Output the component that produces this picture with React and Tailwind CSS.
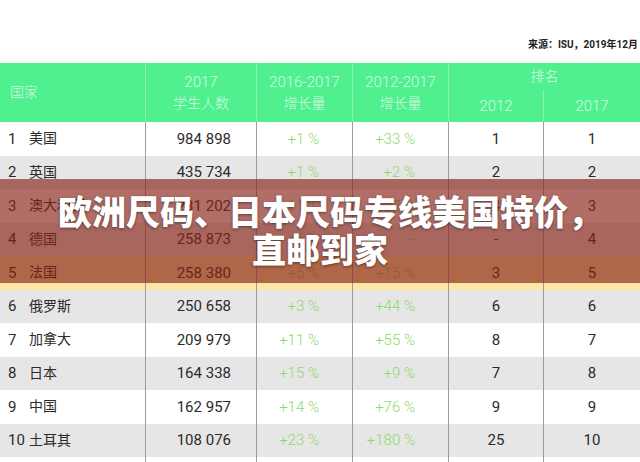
import React from "react";

const rows = [
  ["1", "美国", "984 898", "+1 %", "+33 %", "1", "1"],
  ["2", "英国", "435 734", "+1 %", "+2 %", "2", "2"],
  ["3", "澳大利亚", "231 202", "+11 %", "+37 %", "4", "3"],
  ["4", "德国", "258 873", "+5 %", "-", "-", "4"],
  ["5", "法国", "258 380", "+5 %", "+15 %", "3", "5"],
  ["6", "俄罗斯", "250 658", "+3 %", "+44 %", "6", "6"],
  ["7", "加拿大", "209 979", "+11 %", "+55 %", "8", "7"],
  ["8", "日本", "164 338", "+15 %", "+9 %", "7", "8"],
  ["9", "中国", "162 957", "+14 %", "+76 %", "9", "9"],
  ["10", "土耳其", "108 076", "+23 %", "+180 %", "25", "10"],
];

const cols = "grid-cols-[146px_111px_96px_96px_95px_96px]";

function Row({ r, i }) {
  const bg = i === 4 ? "bg-[#fde6a6]" : i % 2 === 0 ? "bg-white" : "bg-[#e6e6e6]";
  const cell = "flex items-center border-r border-[#9c9c9c]";
  return (
    <div className={`grid ${cols} h-[33.5px] ${bg} text-[15px] text-[#2b2b2b]`}>
      <div className={`${cell} pl-2`}>
        <span className="w-[21px]">{r[0]}</span>
        <span className="text-[14px]">{r[1]}</span>
      </div>
      <div className={`${cell} justify-end pr-[25px]`}>{r[2]}</div>
      <div className={`${cell} justify-end pr-[33px] text-[#8fd86c] font-light`}>{r[3]}</div>
      <div className={`${cell} justify-end pr-[33px] text-[#8fd86c] font-light`}>{r[4]}</div>
      <div className={`${cell} justify-center`}>{r[5]}</div>
      <div className="flex items-center justify-center">{r[6]}</div>
    </div>
  );
}

export default function App() {
  return (
    <div className="relative w-[640px] h-[462px] overflow-hidden bg-white font-['Roboto','Noto_Sans_CJK_SC',sans-serif]">
      <div className="h-[63px] flex items-end justify-end pr-[2px] pb-[11px]">
        <span className="text-[10px] font-bold text-[#222]">来源：ISU，2019年12月</span>
      </div>

      <div className={`grid ${cols} h-[59px] bg-[#50f08f] text-[#d4fbe3] font-light`}>
        <div className="flex items-center pl-[10px] text-[14px] border-r border-[#86f4b1]">国家</div>
        <div className="flex flex-col items-center justify-center leading-[21px] border-r border-[#86f4b1]">
          <span className="text-[15px]">2017</span>
          <span className="text-[14px]">学生人数</span>
        </div>
        <div className="flex flex-col items-center justify-center leading-[21px] border-r border-[#86f4b1]">
          <span className="text-[15px]">2016-2017</span>
          <span className="text-[14px]">增长量</span>
        </div>
        <div className="flex flex-col items-center justify-center leading-[21px] border-r border-[#86f4b1]">
          <span className="text-[15px]">2012-2017</span>
          <span className="text-[14px]">增长量</span>
        </div>
        <div className="col-span-2 flex flex-col">
          <div className="h-[27px] flex items-center justify-center text-[14px]">排名</div>
          <div className="flex-1 grid grid-cols-[95px_96px] text-[15px]">
            <div className="flex items-center justify-center border-r border-[#86f4b1]">2012</div>
            <div className="flex items-center justify-center">2017</div>
          </div>
        </div>
      </div>

      {rows.map((r, i) => (
        <Row key={i} r={r} i={i} />
      ))}
      <div className={`grid ${cols} h-[10px]`}>
        <div className="border-r border-[#9c9c9c]" />
        <div className="border-r border-[#9c9c9c]" />
        <div className="border-r border-[#9c9c9c]" />
        <div className="border-r border-[#9c9c9c]" />
        <div className="border-r border-[#9c9c9c]" />
        <div />
      </div>

      <div className="absolute left-0 right-0 top-[179px] h-[104px] bg-[rgba(135,35,25,0.66)] flex flex-col items-center justify-center pb-[2px]">
        <p className="text-white font-black text-[34px] leading-[38px] pl-[20px] font-['Noto_Sans_CJK_SC',sans-serif] [text-shadow:0_1px_3px_rgba(0,0,0,0.45)]">
          欧洲尺码、日本尺码专线美国特价，
        </p>
        <p className="text-white font-black text-[34px] leading-[38px] font-['Noto_Sans_CJK_SC',sans-serif] [text-shadow:0_1px_3px_rgba(0,0,0,0.45)]">
          直邮到家
        </p>
      </div>
    </div>
  );
}
